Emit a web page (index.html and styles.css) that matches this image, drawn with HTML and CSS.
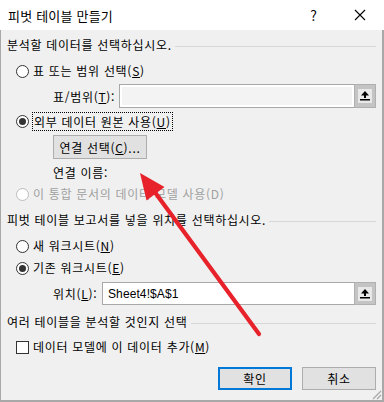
FILE: index.html
```html
<!DOCTYPE html>
<html lang="ko">

<head>
  <meta charset="UTF-8">
  <meta name="viewport" content="width=device-width, initial-scale=1.0">
  <title>피벗 테이블 만들기</title>
  <link rel="stylesheet" href="styles.css">
</head>

<body>
  <div class="dialog">
    <div class="titlebar">
      <span class="title">피벗 테이블 만들기</span>
      <span class="help">?</span>
      <svg class="close" width="12" height="12" viewBox="0 0 12 12">
        <path d="M1 1 L11 11 M11 1 L1 11" stroke="#000" stroke-width="1.1" fill="none" />
      </svg>
    </div>

    <div class="content">
      <div class="group-head head-1">분석할 데이터를 선택하십시오.</div>

      <div class="option opt-table">
        <span class="radio"></span>
        <span>표 또는 범위 선택(<u>S</u>)</span>
      </div>

      <div class="field field-range">
        <span class="field-label">표/범위(<u>T</u>):</span>
        <div class="textbox disabled"></div>
        <span class="pick">
          <svg width="14" height="14" viewBox="0 0 14 14">
            <rect width="14" height="14" fill="#e8e8e8" />
            <path d="M7 2 L11 6.5 L3 6.5 Z" fill="#000" />
            <rect x="6" y="6" width="2" height="3" fill="#000" />
            <rect x="2" y="10" width="10" height="1.5" fill="#000" />
          </svg>
        </span>
      </div>

      <div class="option opt-external">
        <span class="radio checked"></span>
        <span class="focus">외부 데이터 원본 사용(<u>U</u>)</span>
      </div>

      <button class="btn btn-connect">연결 선택(<u>C</u>)...</button>

      <div class="conn-name">연결 이름:</div>

      <div class="option opt-model disabled-text">
        <span class="radio off"></span>
        <span>이 통합 문서의 데이터 모델 사용(D)</span>
      </div>

      <div class="group-head head-2">피벗 테이블 보고서를 넣을 위치를 선택하십시오.</div>

      <div class="option opt-new">
        <span class="radio"></span>
        <span>새 워크시트(<u>N</u>)</span>
      </div>

      <div class="option opt-existing">
        <span class="radio checked"></span>
        <span>기존 워크시트(<u>E</u>)</span>
      </div>

      <div class="field field-loc">
        <span class="field-label">위치(<u>L</u>):</span>
        <div class="textbox">Sheet4!$A$1</div>
        <span class="pick">
          <svg width="14" height="14" viewBox="0 0 14 14">
            <rect width="14" height="14" fill="#e8e8e8" />
            <path d="M7 2 L11 6.5 L3 6.5 Z" fill="#000" />
            <rect x="6" y="6" width="2" height="3" fill="#000" />
            <rect x="2" y="10" width="10" height="1.5" fill="#000" />
          </svg>
        </span>
      </div>

      <div class="group-head head-3">여러 테이블을 분석할 것인지 선택</div>

      <div class="option opt-check">
        <span class="check"></span>
        <span>데이터 모델에 이 데이터 추가(<u>M</u>)</span>
      </div>

      <div class="actions">
        <button class="btn btn-ok">확인</button>
        <button class="btn btn-cancel">취소</button>
      </div>

      <svg class="grip" width="12" height="12" viewBox="0 0 12 12">
        <path d="M11 3 L3 11 M11 7 L7 11" stroke="#a8a8a8" stroke-width="1.2" fill="none" />
      </svg>
    </div>

    <!-- 빨간 화살표 -->
    <svg class="arrow" width="384" height="402" viewBox="0 0 384 402">
      <line x1="259" y1="334" x2="154" y2="191" stroke="#e8222a" stroke-width="4.2" stroke-linecap="round" />
      <polygon points="140,173 146.5,200.5 164.5,187" fill="#e8222a" />
    </svg>
  </div>
</body>

</html>
```

FILE: styles.css
```css
body {
  margin: 0;
  font-family: "Noto Sans CJK KR", "Noto Sans", sans-serif;
  font-size: 12px;
  color: #000;
  background: #fff;
}

.dialog {
  position: relative;
  width: 384px;
  height: 402px;
  display: flex;
  flex-direction: column;
  overflow: hidden;
}

.titlebar {
  height: 30px;
  background: #fff;
  display: flex;
  align-items: center;
  padding-left: 8px;
}

.title {
  font-size: 13px;
  letter-spacing: 0.2px;
  flex: 1;
}

.help {
  font-size: 14px;
  margin-right: 37px;
}

.close {
  margin-right: 18px;
}

.content {
  flex: 1;
  background: #f0f0f0;
  border-left: 1px solid #a8a8a8;
  border-right: 2px solid #a8a8a8;
  border-bottom: 2px solid #a8a8a8;
  padding: 5px 6px 0 0;
  display: flex;
  flex-direction: column;
  position: relative;
  letter-spacing: 0.7px;
}

.group-head {
  height: 20px;
  line-height: 20px;
  padding-left: 6px;
  display: flex;
  align-items: center;
  gap: 3px;
  white-space: nowrap;
}

.group-head::after {
  content: "";
  flex: 1;
  height: 1px;
  background: #d7d7d7;
  margin-top: 2px;
}

.head-2 {
  margin-top: 6px;
}

.head-3 {
  margin-top: 7px;
}

.option {
  height: 20px;
  display: flex;
  align-items: center;
  gap: 4px;
  padding-left: 15px;
  line-height: 20px;
}

.opt-table {
  margin-top: 6px;
}

.opt-external {
  margin-top: 3px;
}

.opt-model {
  margin-top: 1px;
}

.opt-new {
  margin-top: 6px;
}

.opt-existing {
  margin-top: 2px;
}

.opt-check {
  margin-top: 5px;
}

.radio {
  width: 11px;
  height: 11px;
  border: 1px solid #333;
  border-radius: 50%;
  background: #fff;
  position: relative;
  flex: none;
}

.radio.checked::after {
  content: "";
  position: absolute;
  left: 2px;
  top: 2px;
  width: 7px;
  height: 7px;
  border-radius: 50%;
  background: #333;
}

.radio.off {
  border-color: #bcbcbc;
}

.check {
  width: 11px;
  height: 11px;
  border: 1px solid #333;
  background: #fff;
  flex: none;
}

.focus {
  outline: 1px dotted #000;
  outline-offset: 0;
  padding: 0 1px;
  line-height: 17px;
}

.disabled-text {
  color: #a0a0a0;
}

.field {
  display: flex;
  align-items: stretch;
  padding-left: 52px;
}

.field-label {
  display: flex;
  align-items: center;
}

.field-range {
  margin-top: 3px;
  height: 24px;
}

.field-range .field-label {
  width: 66px;
}

.field-loc {
  margin-top: 4px;
  height: 23px;
}

.field-loc .field-label {
  width: 49px;
}

.textbox {
  flex: 1;
  border: 1px solid #a8a8a8;
  border-right: none;
  background: #fff;
  display: flex;
  align-items: center;
  padding-left: 5px;
  font-family: "Liberation Sans", sans-serif;
  font-size: 12px;
  letter-spacing: 0.1px;
}

.textbox.disabled {
  background: #f3f3f3;
  box-shadow: inset 0 0 0 2px #fff;
}

.pick {
  width: 22px;
  background: #c4c4c4;
  border: 1px solid #b0b0b0;
  display: flex;
  align-items: center;
  justify-content: center;
  box-sizing: border-box;
}

.btn {
  font-family: inherit;
  font-size: 12px;
  letter-spacing: 0.7px;
  color: #000;
  background: #e1e1e1;
  border: 1px solid #adadad;
  padding: 0;
  box-sizing: border-box;
}

.btn-connect {
  width: 94px;
  height: 24px;
  margin: 4px 0 0 52px;
}

.conn-name {
  height: 20px;
  line-height: 20px;
  margin-top: 4px;
  padding-left: 52px;
}

.actions {
  display: flex;
  justify-content: flex-end;
  gap: 10px;
  margin-top: 10px;
}

.btn-ok,
.btn-cancel {
  width: 74px;
  height: 23px;
}

.btn-ok {
  border: 2px solid #0078d7;
}

.grip {
  position: absolute;
  right: 0;
  bottom: 0;
}

.arrow {
  position: absolute;
  left: 0;
  top: 0;
  pointer-events: none;
}
```
